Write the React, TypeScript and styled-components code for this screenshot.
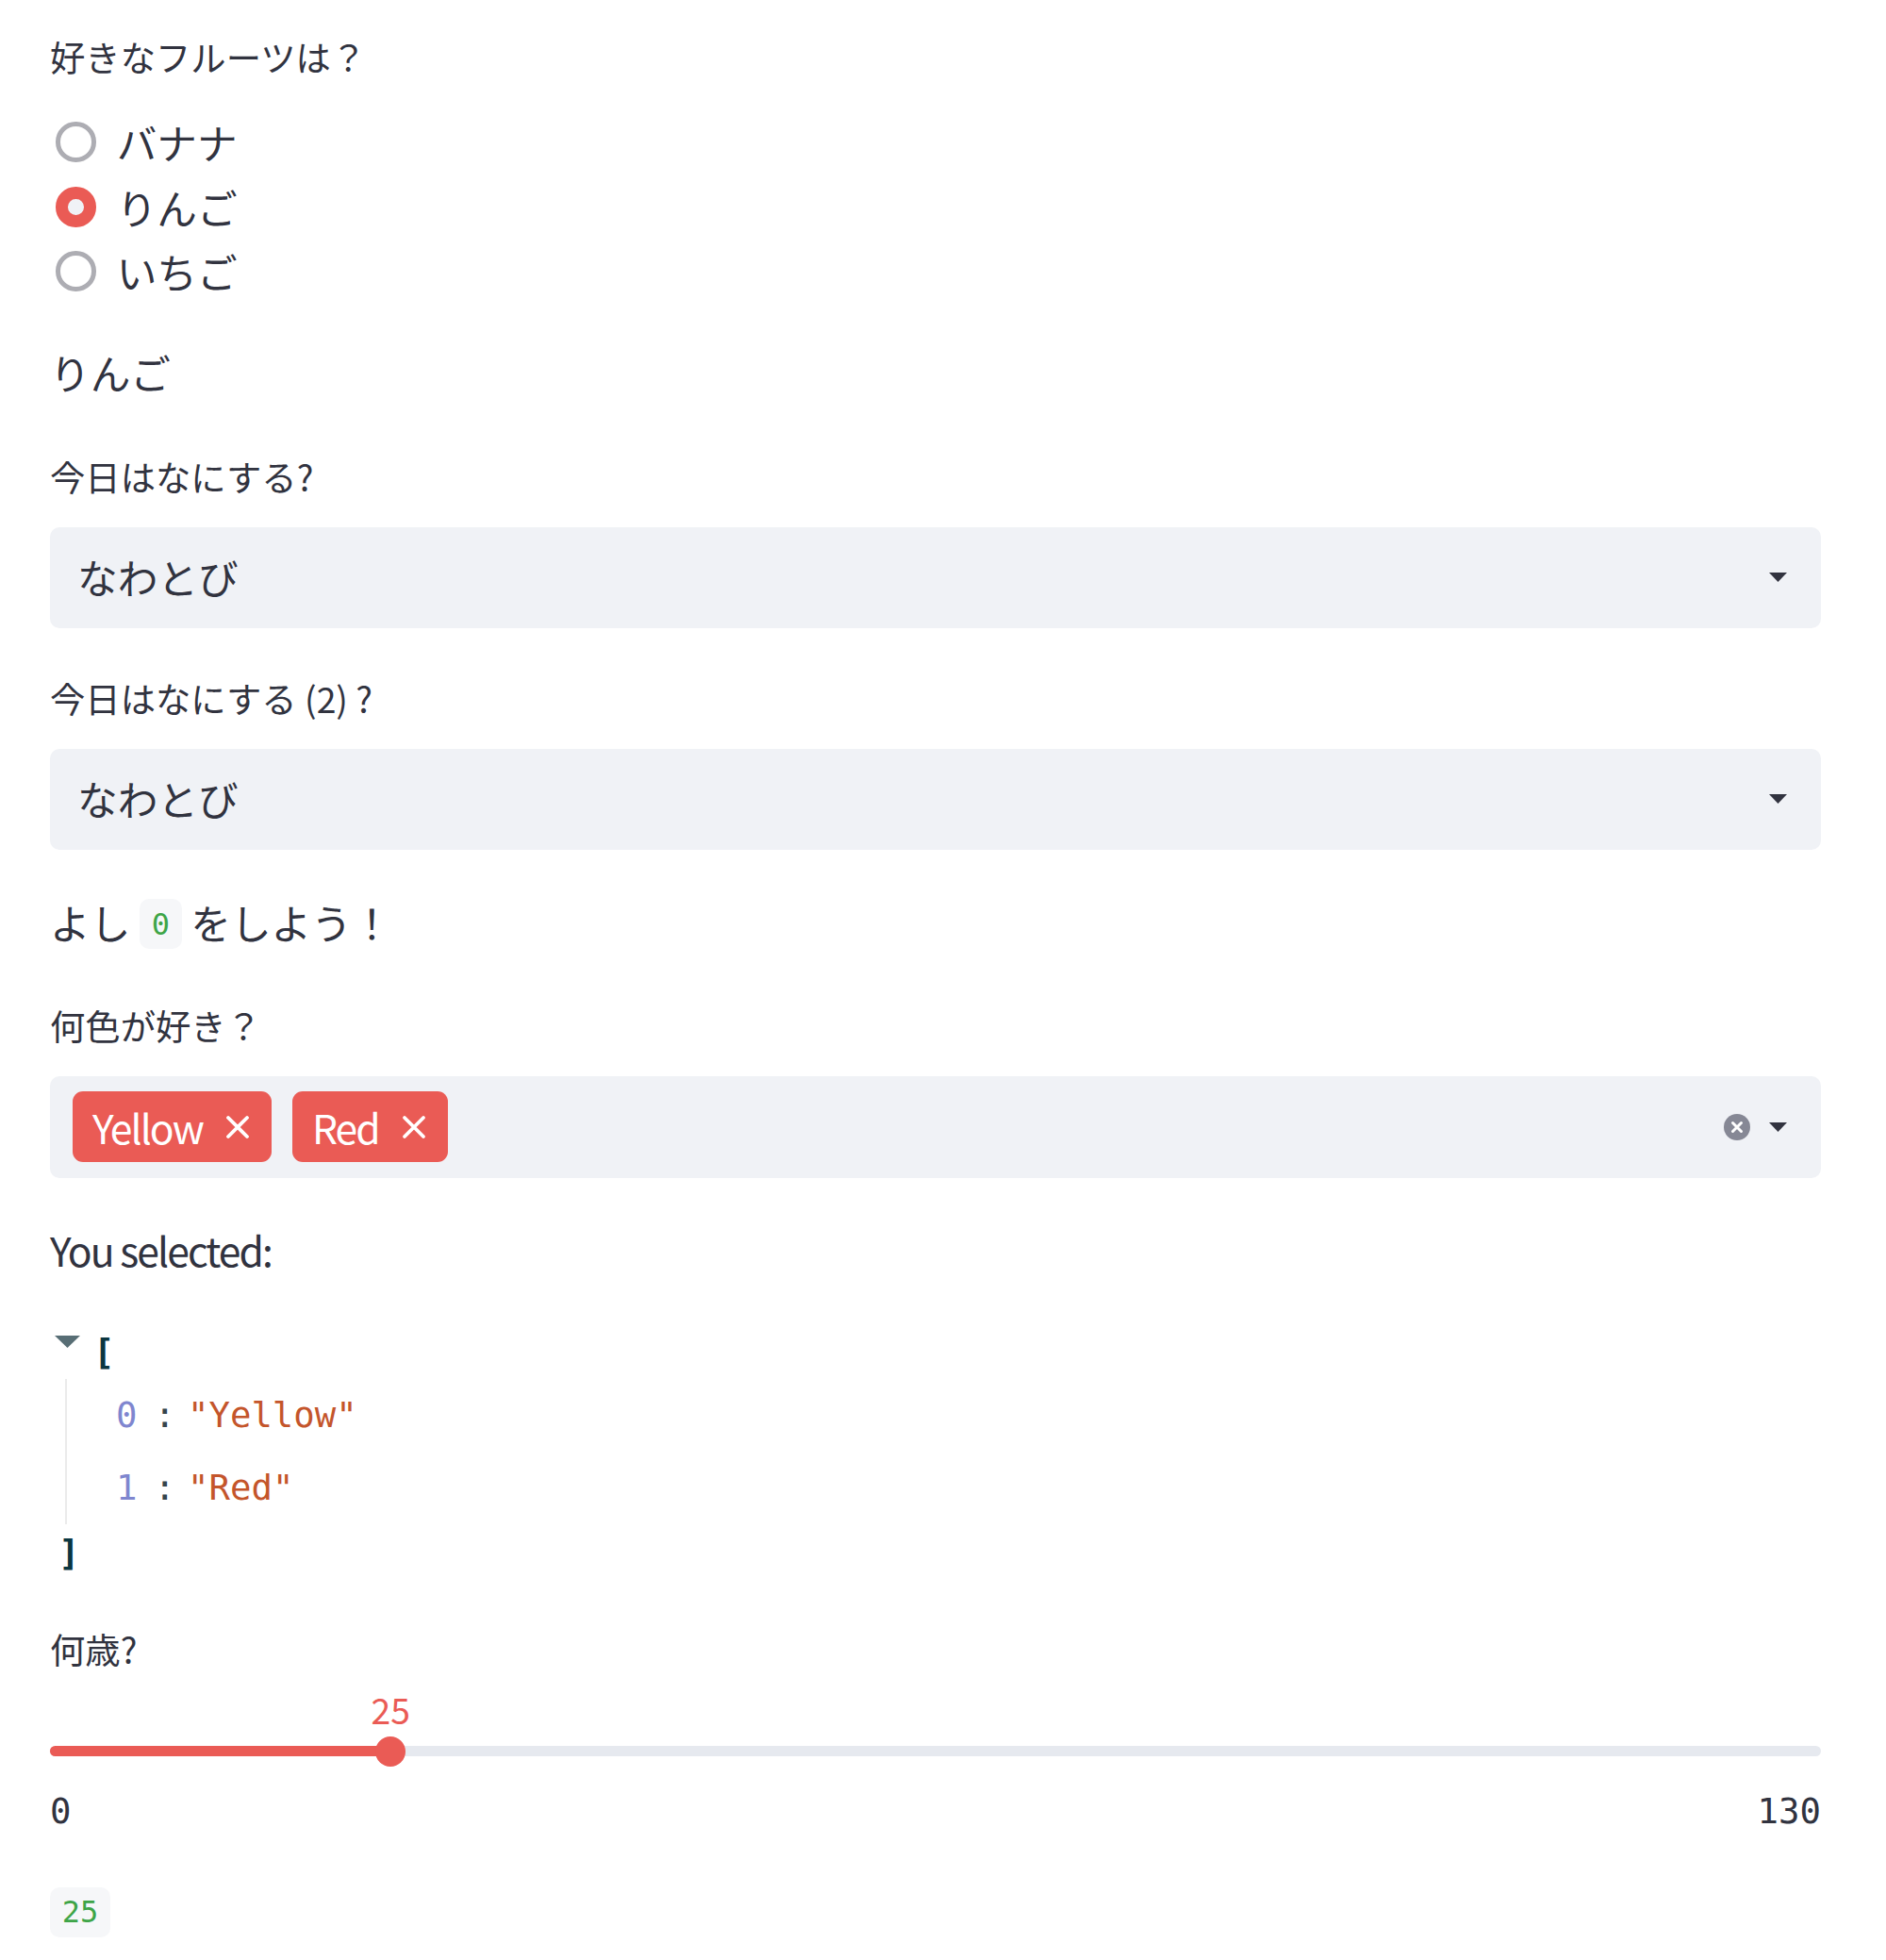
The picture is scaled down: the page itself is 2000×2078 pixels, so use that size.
import React from "react";
import styled, { createGlobalStyle } from "styled-components";

const Global = createGlobalStyle`
  html, body { margin: 0; padding: 0; background: #ffffff; }
  body {
    font-family: "Noto Sans CJK JP", "Noto Sans", sans-serif;
    color: #31333f;
  }
`;

const RED = "#ea5b55";

const Page = styled.main`
  width: 1878px;
  margin-left: 53px;
  padding: 29.5px 0 20px 0;
  display: flex;
  flex-direction: column;
`;

const Block = styled.section<{ $mt?: number }>`
  display: flex;
  flex-direction: column;
  margin-top: ${(p) => p.$mt ?? 0}px;
`;

const Label = styled.div<{ $gap: number }>`
  font-size: 37.33px;
  line-height: 60px;
  height: 60px;
  margin-bottom: ${(p) => p.$gap}px;
`;

const Para = styled.p<{ $mt: number }>`
  margin: ${(p) => p.$mt}px 0 0 0;
  font-size: 42.67px;
  line-height: 68px;
  height: 68px;
`;

const Latin = styled.span`
  letter-spacing: -0.045em;
`;

const RadioList = styled.div`
  display: flex;
  flex-direction: column;
  padding-left: 6px;
`;

const RadioRow = styled.div`
  display: flex;
  align-items: center;
  gap: 22px;
  height: 68.5px;
  font-size: 42.67px;
`;

const RadioDot = styled.span<{ $on: boolean }>`
  flex-shrink: 0;
  box-sizing: border-box;
  width: 42.67px;
  height: 42.67px;
  border-radius: 50%;
  border: ${(p) => (p.$on ? `13px solid ${RED}` : "5px solid #adadb3")};
  background: ${(p) => (p.$on ? "#f0f2f6" : "#ffffff")};
`;

const SelectBox = styled.div<{ $h: number; $pl: number }>`
  box-sizing: border-box;
  height: ${(p) => p.$h}px;
  background: #f0f2f6;
  border-radius: 10px;
  display: flex;
  align-items: center;
  padding: 0 36px 0 ${(p) => p.$pl}px;
  font-size: 42.67px;
`;

const SelectValue = styled.span`
  flex: 1;
  line-height: 1;
`;

const Tags = styled.div`
  flex: 1;
  display: flex;
  align-items: center;
  gap: 22px;
`;

const Tag = styled.span`
  display: inline-flex;
  align-items: center;
  gap: 24px;
  height: 75px;
  padding: 0 23px 0 21px;
  background: ${RED};
  color: #ffffff;
  border-radius: 11px;
  font-size: 42.67px;
`;

const Controls = styled.div`
  display: flex;
  align-items: center;
  gap: 20px;
`;

const Code = styled.code`
  display: inline-block;
  font-family: "DejaVu Sans Mono", "Liberation Mono", monospace;
  font-size: 32px;
  line-height: 40px;
  padding: 6.5px 12.8px;
  color: #3ea548;
  background: #f6f7f9;
  border-radius: 10px;
  vertical-align: 5px;
`;

const Json = styled.div<{ $mt: number }>`
  margin-top: ${(p) => p.$mt}px;
  font-family: "DejaVu Sans Mono", "Liberation Mono", monospace;
  font-size: 37.33px;
  display: flex;
  flex-direction: column;
`;

const JsonOpen = styled.div`
  height: 57px;
  line-height: 57px;
  display: flex;
  align-items: flex-start;
  gap: 14px;
  padding-left: 5px;
`;

const Caret = styled.svg`
  margin-top: 11px;
  flex-shrink: 0;
`;

const Bracket = styled.span`
  color: #0b3640;
  font-weight: bold;
`;

const JsonItems = styled.div`
  margin-left: 16px;
  border-left: 2px solid #ebebeb;
  padding-left: 52px;
  display: flex;
  flex-direction: column;
`;

const JsonRow = styled.div`
  height: 77px;
  line-height: 77px;
  display: flex;
  align-items: baseline;
`;

const JsonKey = styled.span`
  color: #7f86cf;
`;

const JsonColon = styled.span`
  color: #34454b;
  margin: 0 13px 0 18px;
`;

const JsonStr = styled.span`
  color: #c4552b;
`;

const JsonClose = styled.div`
  height: 60px;
  line-height: 60px;
  padding-left: 9px;
`;

const SliderArea = styled.div`
  padding-top: 73.5px;
`;

const Track = styled.div`
  position: relative;
  height: 11px;
  border-radius: 6px;
  background: #e6e9ef;
`;

const Fill = styled.div`
  height: 100%;
  border-radius: 6px;
  background: ${RED};
`;

const Thumb = styled.div`
  position: absolute;
  top: 50%;
  width: 32px;
  height: 32px;
  border-radius: 50%;
  background: ${RED};
  transform: translate(-50%, -50%);
`;

const ThumbValue = styled.div`
  position: absolute;
  left: 50%;
  bottom: calc(100% + 9px);
  transform: translateX(-50%);
  color: ${RED};
  font-size: 37.33px;
  line-height: 40px;
  white-space: nowrap;
`;

const Ticks = styled.div`
  display: flex;
  justify-content: space-between;
  margin-top: 32.5px;
  height: 50px;
  line-height: 50px;
  font-family: "DejaVu Sans Mono", "Liberation Mono", monospace;
  font-size: 37.33px;
`;

const CodeLine = styled.div<{ $mt: number }>`
  display: flex;
  margin-top: ${(p) => p.$mt}px;
`;

const Arrow = () => (
  <svg width="19" height="10" viewBox="0 0 19 10">
    <polygon points="0,0 19,0 9.5,10" fill="#31333f" />
  </svg>
);

const TagX = () => (
  <svg width="26" height="26" viewBox="0 0 26 26">
    <path d="M3 3 L23 23 M23 3 L3 23" stroke="#ffffff" strokeWidth="3.8" strokeLinecap="round" />
  </svg>
);

const ClearIcon = () => (
  <svg width="28" height="28" viewBox="0 0 28 28">
    <circle cx="14" cy="14" r="14" fill="#868895" />
    <path d="M9.5 9.5 L18.5 18.5 M18.5 9.5 L9.5 18.5" stroke="#ffffff" strokeWidth="3" strokeLinecap="round" />
  </svg>
);

const fruits = ["バナナ", "りんご", "いちご"];
const colors = ["Yellow", "Red"];
const age = 25;
const maxAge = 130;

export default function App() {
  const pct = (age / maxAge) * 100;
  return (
    <>
      <Global />
      <Page>
        <Block>
          <Label $gap={27}>好きなフルーツは？</Label>
          <RadioList>
            {fruits.map((f) => (
              <RadioRow key={f}>
                <RadioDot $on={f === "りんご"} />
                <span>{f}</span>
              </RadioRow>
            ))}
          </RadioList>
        </Block>

        <Para $mt={39}>りんご</Para>

        <Block $mt={45.5}>
          <Label $gap={24}>今日はなにする?</Label>
          <SelectBox $h={107} $pl={29}>
            <SelectValue>なわとび</SelectValue>
            <Arrow />
          </SelectBox>
        </Block>

        <Block $mt={44}>
          <Label $gap={24}>今日はなにする (2) ?</Label>
          <SelectBox $h={107} $pl={29}>
            <SelectValue>なわとび</SelectValue>
            <Arrow />
          </SelectBox>
        </Block>

        <Para $mt={43}>
          よし <Code>0</Code> をしよう！
        </Para>

        <Block $mt={45}>
          <Label $gap={24}>何色が好き？</Label>
          <SelectBox $h={108} $pl={24}>
            <Tags>
              {colors.map((c) => (
                <Tag key={c}>
                  <Latin>{c}</Latin>
                  <TagX />
                </Tag>
              ))}
            </Tags>
            <Controls>
              <ClearIcon />
              <Arrow />
            </Controls>
          </SelectBox>
        </Block>

        <Para $mt={42}>
          <Latin>You selected:</Latin>
        </Para>

        <Json $mt={46}>
          <JsonOpen>
            <Caret width="27" height="13" viewBox="0 0 27 13">
              <polygon points="0,0 27,0 13.5,13" fill="#586e75" />
            </Caret>
            <Bracket>[</Bracket>
          </JsonOpen>
          <JsonItems>
            {colors.map((c, i) => (
              <JsonRow key={c}>
                <JsonKey>{i}</JsonKey>
                <JsonColon>:</JsonColon>
                <JsonStr>"{c}"</JsonStr>
              </JsonRow>
            ))}
          </JsonItems>
          <JsonClose>
            <Bracket>]</Bracket>
          </JsonClose>
        </Json>

        <Block $mt={42}>
          <Label $gap={0}>何歳?</Label>
          <SliderArea>
            <Track>
              <Fill style={{ width: `${pct}%` }} />
              <Thumb style={{ left: `${pct}%` }}>
                <ThumbValue>{age}</ThumbValue>
              </Thumb>
            </Track>
          </SliderArea>
          <Ticks>
            <span>0</span>
            <span>{maxAge}</span>
          </Ticks>
        </Block>

        <CodeLine $mt={56}>
          <Code>{age}</Code>
        </CodeLine>
      </Page>
    </>
  );
}
